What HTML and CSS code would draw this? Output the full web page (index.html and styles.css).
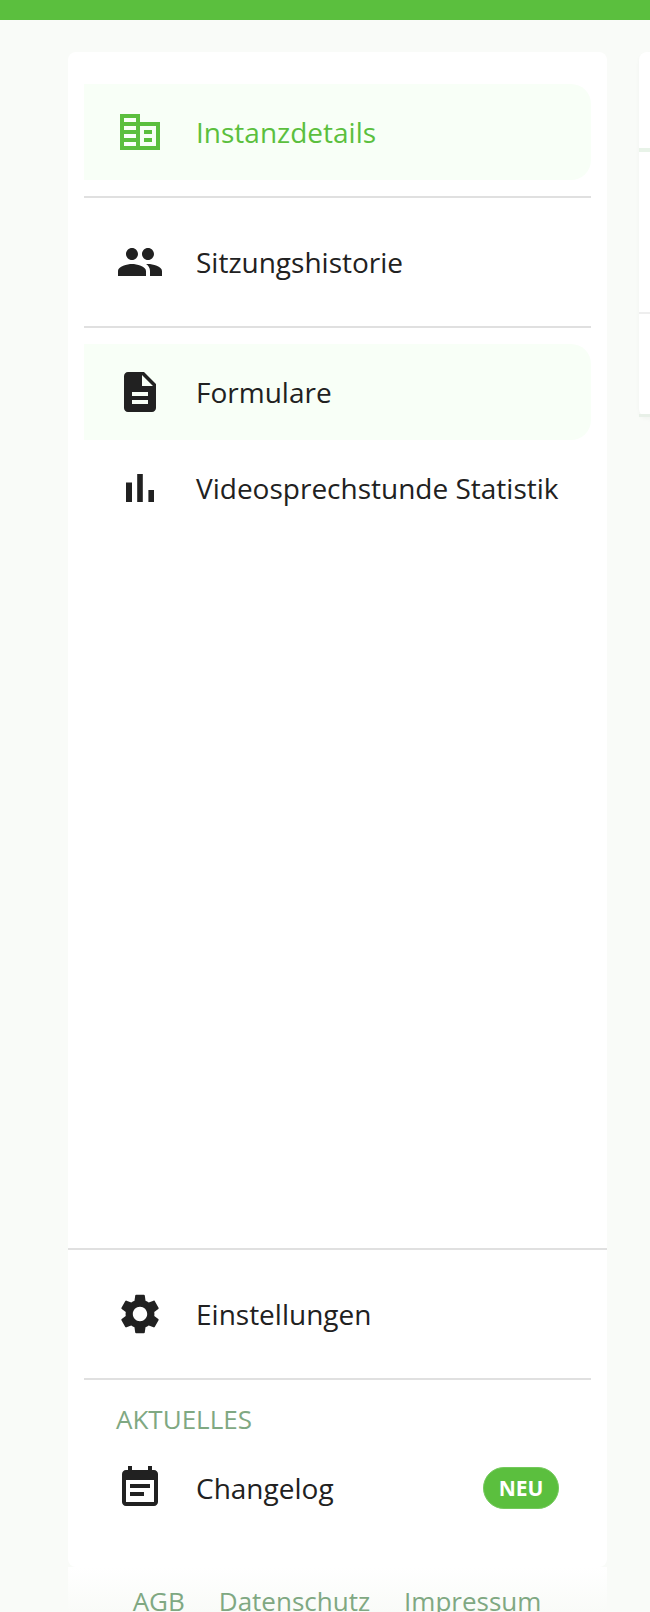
FILE: index.html
```html
<!DOCTYPE html>
<html lang="de">
  <head>
    <meta charset="UTF-8" />
    <meta name="viewport" content="width=device-width, initial-scale=1.0" />
    <title>Instanzdetails</title>
    <link rel="stylesheet" href="styles.css">
  </head>
  <body>
    <div class="topbar"></div>
    <div class="main">
      <div class="side-col">
        <aside class="sidebar">
          <nav class="nav-top">
            <a class="item active">
              <svg class="icon" viewBox="0 0 24 24"><path d="M12 7V3H2v18h20V7H12zM10 19H4v-2h6v2zm0-4H4v-2h6v2zm0-4H4V9h6v2zm0-4H4V5h6v2zm10 12h-8V9h8v10zm-2-8h-4v2h4v-2zm0 4h-4v2h4v-2z"/></svg>
              <span>Instanzdetails</span>
            </a>
            <hr class="divider" />
            <a class="item">
              <svg class="icon" viewBox="0 0 24 24"><path d="M16 11c1.66 0 2.99-1.34 2.99-3S17.66 5 16 5c-1.66 0-3 1.34-3 3s1.34 3 3 3zm-8 0c1.66 0 2.99-1.34 2.99-3S9.66 5 8 5C6.34 5 5 6.34 5 8s1.34 3 3 3zm0 2c-2.33 0-7 1.17-7 3.5V19h14v-2.5c0-2.33-4.67-3.5-7-3.5zm8 0c-.29 0-.62.02-.97.05 1.16.84 1.97 1.97 1.97 3.45V19h6v-2.5c0-2.33-4.67-3.5-7-3.5z"/></svg>
              <span>Sitzungshistorie</span>
            </a>
            <hr class="divider" />
            <a class="item hover">
              <svg class="icon" viewBox="0 0 24 24"><path d="M14 2H6c-1.1 0-1.99.9-1.99 2L4 20c0 1.1.89 2 1.99 2H18c1.1 0 2-.9 2-2V8l-6-6zm2 16H8v-2h8v2zm0-4H8v-2h8v2zm-3-5V3.5L18.5 9H13z"/></svg>
              <span>Formulare</span>
            </a>
            <a class="item">
              <svg class="icon" viewBox="0 0 24 24"><path d="M5 9.2h3V19H5zM10.6 5h2.8v14h-2.8zm5.6 8H19v6h-2.8z"/></svg>
              <span>Videosprechstunde Statistik</span>
            </a>
          </nav>
          <nav class="nav-bottom">
            <a class="item">
              <svg class="icon" viewBox="0 0 24 24"><path d="M19.14 12.94c.04-.3.06-.61.06-.94 0-.32-.02-.64-.07-.94l2.03-1.58c.18-.14.23-.41.12-.61l-1.92-3.32c-.12-.22-.37-.29-.59-.22l-2.39.96c-.5-.38-1.03-.7-1.62-.94L14.4 2.81c-.04-.24-.24-.41-.48-.41h-3.84c-.24 0-.43.17-.47.41L9.25 5.35c-.59.24-1.13.57-1.62.94l-2.39-.96c-.22-.08-.47 0-.59.22L2.74 8.87c-.12.21-.08.47.12.61l2.03 1.58c-.05.3-.09.63-.09.94s.02.64.07.94l-2.03 1.58c-.18.14-.23.41-.12.61l1.92 3.32c.12.22.37.29.59.22l2.39-.96c.5.38 1.03.7 1.62.94l.36 2.54c.05.24.24.41.48.41h3.84c.24 0 .44-.17.47-.41l.36-2.54c.59-.24 1.13-.56 1.62-.94l2.39.96c.22.08.47 0 .59-.22l1.92-3.32c.12-.22.07-.47-.12-.61l-2.01-1.58zM12 15.6c-1.98 0-3.6-1.62-3.6-3.6s1.62-3.6 3.6-3.6 3.6 1.62 3.6 3.6-1.62 3.6-3.6 3.6z"/></svg>
              <span>Einstellungen</span>
            </a>
            <hr class="divider" />
            <div class="label">AKTUELLES</div>
            <a class="item">
              <svg class="icon" viewBox="0 0 24 24"><path d="M17 10H7v2h10v-2zm2-7h-1V1h-2v2H8V1H6v2H5c-1.11 0-1.99.9-1.99 2L3 19c0 1.1.89 2 2 2h14c1.1 0 2-.9 2-2V5c0-1.1-.9-2-2-2zm0 16H5V8h14v11zm-5-5H7v2h7v-2z"/></svg>
              <span>Changelog</span>
              <span class="badge">NEU</span>
            </a>
          </nav>
        </aside>
        <footer class="links">
          <a>AGB</a>
          <a>Datenschutz</a>
          <a>Impressum</a>
        </footer>
      </div>
      <section class="panel">
        <div class="panel-row first"></div>
        <div class="panel-row"></div>
        <div class="panel-row last"></div>
      </section>
    </div>
  </body>
</html>
```

FILE: styles.css
```css
:root {
  --green: #5bbf3e;
  --text: #212121;
  --muted: #7fa882;
  --line: #e0e0e0;
  --bodyBg: #f9fbf8;
}

html,
body {
  height: 1612px;
}

body {
  margin: 0;
  overflow: hidden;
  background-color: var(--bodyBg);
  color: var(--text);
  font-family: "Open Sans", sans-serif;
}

.topbar {
  height: 20px;
  background-color: var(--green);
}

.main {
  display: flex;
  gap: 32px;
  padding: 32px 0 0 68px;
}

.side-col {
  flex: 0 0 539px;
}

.sidebar {
  display: flex;
  flex-direction: column;
  justify-content: space-between;
  height: 1515px;
  background-color: #fff;
  border-radius: 8px;
}

.nav-top {
  padding: 32px 16px 0;
}

.nav-bottom {
  padding: 16px 16px 31px;
  border-top: 2px solid var(--line);
}

.divider {
  height: 2px;
  margin: 16px 0;
  border: 0;
  background-color: var(--line);
}

.item {
  display: flex;
  align-items: center;
  gap: 32px;
  height: 96px;
  padding: 0 32px;
  font-size: 28px;
  border-radius: 0 20px 20px 0;
}

.item.active {
  background-color: #f8fff7;
  color: var(--green);
}

.item.hover {
  background-color: #f8fff7;
}

.icon {
  flex: none;
  width: 48px;
  height: 48px;
  fill: currentColor;
}

.label {
  display: flex;
  align-items: center;
  height: 44px;
  padding: 2px 32px 0;
  box-sizing: border-box;
  font-size: 26px;
  color: var(--muted);
}

.badge {
  display: flex;
  align-items: center;
  justify-content: center;
  box-sizing: border-box;
  width: 76px;
  height: 42px;
  margin-left: auto;
  border: 1px solid #74c95c;
  border-radius: 21px;
  background-color: var(--green);
  color: #fff;
  font-size: 21px;
  font-weight: 700;
}

.links {
  display: flex;
  justify-content: center;
  gap: 34px;
  height: 45px;
  padding: 16px 1px 0 0;
  box-sizing: border-box;
  background: linear-gradient(#fff, var(--bodyBg));
  font-size: 26px;
  color: var(--muted);
}

.panel {
  flex: 0 0 400px;
  height: 365px;
  background-color: #fff;
  border-radius: 8px 0 0 8px;
  box-shadow: 0 2px 4px rgba(0, 0, 0, 0.03);
}

.panel-row {
  box-sizing: border-box;
  border-bottom: 2px solid #eee;
}

.panel-row.first {
  height: 100px;
  border-bottom: 4px solid #e8f3e8;
}

.panel-row:nth-child(2) {
  height: 162px;
}

.panel-row.last {
  height: 103px;
  border-bottom: 3px solid #e8f0e8;
}
```
